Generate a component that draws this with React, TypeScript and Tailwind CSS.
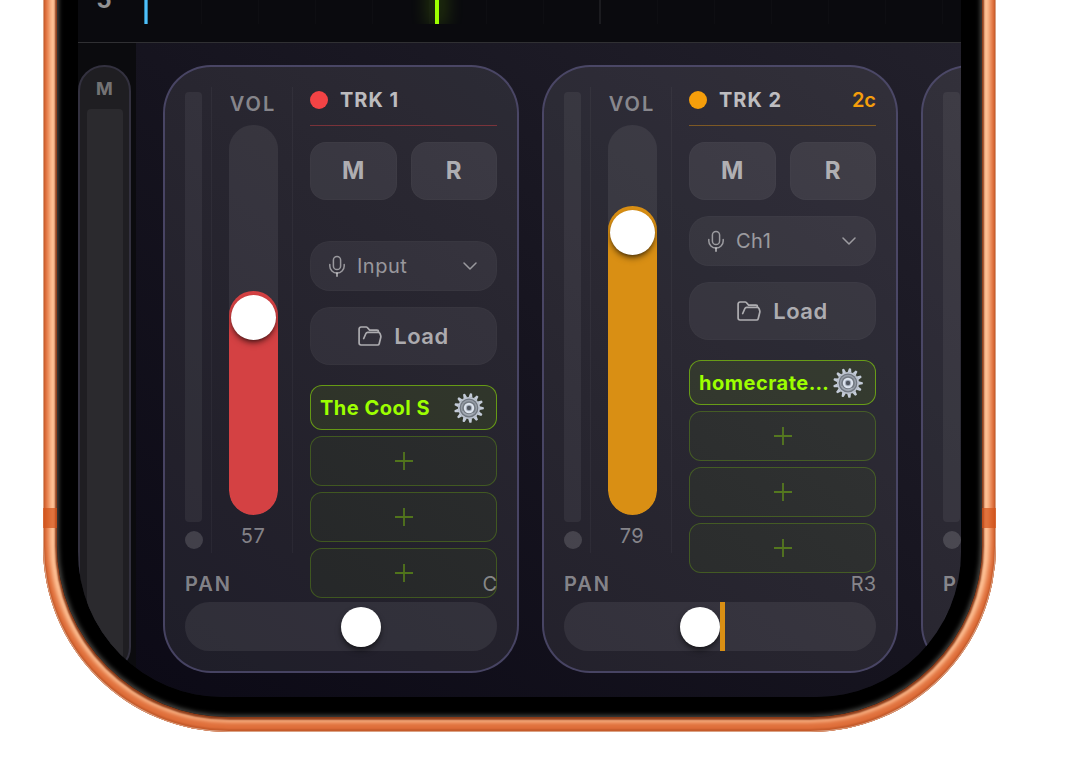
import type { ReactNode } from "react";
import clsx from "clsx";

type Track = {
  id: number;
  name: string;
  badge?: string;
  volume: number;
  pan: string;
  panValue: number;
  input: string;
  plugin: string;
};

const tracks: Track[] = [
  { id: 1, name: "TRK 1", volume: 57.4, pan: "C", panValue: 0, input: "Input", plugin: "The Cool S" },
  { id: 2, name: "TRK 2", badge: "2c", volume: 79.2, pan: "R3", panValue: 3, input: "Ch1", plugin: "homecrate FX" },
  { id: 3, name: "TRK 3", volume: 70, pan: "C", panValue: 0, input: "Input", plugin: "Reverb" },
];

const colors: Record<number, { dot: string; fill: string; line: string }> = {
  1: { dot: "bg-[#f24345]", fill: "bg-[#d44143]", line: "border-[#f24345]/40" },
  2: { dot: "bg-[#f59e0b]", fill: "bg-[#d98f14]", line: "border-[#f59e0b]/40" },
  3: { dot: "bg-[#22c55e]", fill: "bg-[#22a555]", line: "border-[#22c55e]/40" },
};

const beats = Array.from({ length: 15 }, (_, i) => i);
const teeth = Array.from({ length: 13 }, (_, i) => i);

const MicIcon = () => (
  <svg className="h-[22px] w-[18px] shrink-0" viewBox="0 0 18 22" fill="none" stroke="currentColor" strokeWidth="1.5" strokeLinecap="round">
    <rect x="5.4" y="1.5" width="7.2" height="13" rx="3.6" />
    <path d="M1.8 9.5v1.4a7.2 7.2 0 0 0 14.4 0V9.5" />
    <path d="M9 18.2V21" strokeWidth="2" />
  </svg>
);

const ChevronIcon = () => (
  <svg className="h-2 w-[14px] shrink-0" viewBox="0 0 14 8" fill="none" stroke="currentColor" strokeWidth="1.5" strokeLinecap="round" strokeLinejoin="round">
    <path d="M1 1l6 6 6-6" />
  </svg>
);

const FolderIcon = () => (
  <svg className="h-5 w-6 shrink-0" viewBox="0 0 24 20" fill="none" stroke="currentColor" strokeWidth="1.7" strokeLinecap="round" strokeLinejoin="round">
    <path d="M20.5 6.2V5.6c0-.9-.6-1.5-1.5-1.5h-7.4L9.3 1.5a1.6 1.6 0 0 0-1.1-.5H3A1.9 1.9 0 0 0 1.1 2.9v14.2C1.1 18.2 1.9 19 3 19h16.5c.8 0 1.5-.5 1.7-1.3l1.6-6.4c.1-.5.1-1 0-1.4l-.7-2.2c-.3-.8-.9-1.3-1.8-1.3H9.7c-.8 0-1.5.4-1.8 1.1L5.7 12.5" />
  </svg>
);

const GearIcon = () => (
  <svg className="h-[30px] w-[30px]" viewBox="-15 -15 30 30">
    {teeth.map((i) => (
      <path
        key={i}
        d="M-1.9 -10.5L-1.1 -14.6Q0 -15.2 1.1 -14.6L1.9 -10.5Z"
        fill="#c3cbd8"
        transform={`rotate(${(i * 360) / 13 + 8})`}
      />
    ))}
    <circle r="11" fill="#bcc3cf" />
    <circle r="9.4" fill="#6f767f" />
    <circle r="8.2" fill="#969da7" />
    <circle r="6.8" fill="#737a83" />
    <path d="M-6.5 3a7 7 0 0 0 11 2" fill="none" stroke="#a4abb4" strokeWidth="1.2" />
    <circle r="5.2" fill="#dde4ee" />
    <circle r="3.2" fill="#a9b2bf" />
    <circle r="2.2" fill="#50565f" />
  </svg>
);

const PadButton = ({ children }: { children: ReactNode }) => (
  <button className="h-[58px] flex-1 rounded-2xl border border-white/2 bg-white/8 text-2xl font-bold text-white/60">
    {children}
  </button>
);

const VolumeFader = ({ track }: { track: Track }) => (
  <div className="ml-[2px] flex w-[49px] flex-col items-center">
    <label htmlFor={`vol-${track.id}`} className="mt-1 h-[34px] text-xl leading-[26px] font-semibold tracking-widest text-white/45">
      VOL
    </label>
    <div className="relative flex h-[390px] w-full flex-col justify-end overflow-hidden rounded-full bg-white/7">
      <div
        className={clsx("flex justify-center rounded-full pt-1", colors[track.id].fill)}
        style={{ height: `${track.volume}%` }}
      >
        <div className="size-[45px] rounded-full bg-white shadow-md shadow-black/50" />
      </div>
      <input
        id={`vol-${track.id}`}
        type="range"
        step={0.1}
        defaultValue={track.volume}
        className="absolute inset-0 h-full w-full opacity-0 [writing-mode:vertical-lr] [direction:rtl]"
      />
    </div>
    <span className="mt-2 text-xl leading-[26px] tracking-wide text-white/45">{Math.round(track.volume)}</span>
  </div>
);

const PluginSlots = ({ plugin }: { plugin: string }) => (
  <div className="mt-1 flex flex-col gap-[6px]">
    <div className="flex h-[45px] items-center justify-between rounded-xl border border-[#9dff00]/50 bg-[#9dff00]/8 pr-3 pl-[9px]">
      <button className="min-w-0 truncate text-left text-xl leading-7 font-bold tracking-wide text-[#9dff00]">{plugin}</button>
      <button aria-label="Plugin settings" className="shrink-0">
        <GearIcon />
      </button>
    </div>
    {[1, 2, 3].map((slot) => (
      <button
        key={slot}
        aria-label="Add plugin"
        className="flex h-[50px] items-center justify-center rounded-xl border border-[#9dff00]/22 bg-[#9dff00]/4 text-[#9dff00]/35"
      >
        <svg className="size-[18px]" viewBox="0 0 18 18" stroke="currentColor" strokeWidth="1.8">
          <path d="M9 0v18M0 9h18" />
        </svg>
      </button>
    ))}
  </div>
);

const Pan = ({ track }: { track: Track }) => (
  <div className="relative flex flex-col gap-[5px] pt-[18px]">
    <div className="flex items-center justify-between text-xl leading-[26px] text-white/45">
      <label htmlFor={`pan-${track.id}`} className="font-semibold tracking-widest">
        PAN
      </label>
      <span>{track.pan}</span>
    </div>
    <div className="relative flex h-[49px] items-center rounded-full bg-white/7">
      <div className={clsx("flex w-1/2 justify-end", track.panValue === 0 && "translate-x-10")}>
        <div className="size-10 rounded-full bg-white shadow-md shadow-black/50" />
      </div>
      <div
        className={clsx("h-full", colors[track.id].fill)}
        style={{ width: `${track.panValue / 2}%` }}
      />
      <input
        id={`pan-${track.id}`}
        type="range"
        min={-100}
        max={100}
        defaultValue={track.panValue}
        className="absolute inset-0 h-full w-full opacity-0"
      />
    </div>
  </div>
);

const TrackStrip = ({ track }: { track: Track }) => (
  <section className="flex w-[356px] shrink-0 flex-col rounded-[48px] border-2 border-[#57527a]/70 bg-white/8 p-5">
    <div className="flex h-[466px]">
      <div className="flex w-[27px] flex-col gap-[9px] border-r border-white/4 pt-[5px]">
        <div className="h-[430px] w-[17px] rounded bg-white/6" />
        <div className="size-[18px] rounded-full bg-white/15" />
      </div>
      <div className="flex w-[81px] justify-center border-r border-white/4">
        <VolumeFader track={track} />
      </div>
      <div className="ml-[17px] flex min-w-0 flex-1 flex-col gap-4">
        <header className={clsx("flex items-center gap-3 border-b pb-3", colors[track.id].line)}>
          <span className={clsx("size-[18px] rounded-full", colors[track.id].dot)} />
          <h2 className="text-xl leading-[26px] font-bold tracking-wider text-white/70">{track.name}</h2>
          {track.badge && (
            <span className="ml-auto text-xl leading-[26px] font-semibold text-[#f59e0b]">{track.badge}</span>
          )}
        </header>
        <div className="flex gap-[14px]">
          <PadButton>M</PadButton>
          <PadButton>R</PadButton>
        </div>
        <label
          className={clsx(
            "flex h-[50px] shrink-0 items-center gap-[11px] rounded-[20px] border border-white/2 bg-white/6 pr-[19px] pl-[17px] text-white/50",
            !track.badge && "mt-[25px]",
          )}
        >
          <MicIcon />
          <select
            aria-label="Input channel"
            className="min-w-0 flex-1 appearance-none bg-transparent text-xl tracking-wide"
          >
            <option>{track.input}</option>
          </select>
          <ChevronIcon />
        </label>
        <button className="flex h-[58px] shrink-0 items-center justify-center gap-3 rounded-[20px] border border-white/2 bg-white/6 text-[22px] font-semibold tracking-wide text-white/60">
          <FolderIcon />
          Load
        </button>
        <PluginSlots plugin={track.plugin} />
      </div>
    </div>
    <Pan track={track} />
  </section>
);

const Timeline = () => (
  <div className="flex h-[67px] border-b border-[#303033] bg-[#0a0a0e]">
    <div className="w-[66px] shrink-0 pt-[10px] pr-[14px] text-center text-2xl leading-7 font-bold text-white/55">5</div>
    <div className="relative flex h-12 flex-1 overflow-hidden">
      <div className="w-1 shrink-0 border-x border-[#2f7fa5] bg-[#4fc0fa]" />
      <div className="-ml-[3px] flex">
        {beats.map((beat) => (
          <div
            key={beat}
            className={clsx("w-[57px] shrink-0 border-r", beat === 7 ? "border-r-2 border-white/7" : "border-white/2")}
          />
        ))}
      </div>
      <div className="absolute inset-y-0 left-[291px] w-1 bg-[#9dff00] shadow-[0_0_20px_3px_#9dff0050]" />
    </div>
  </div>
);

const MasterStrip = () => (
  <aside className="flex w-[58px] shrink-0 bg-[#0b0b0e] pt-[22px] pr-[5px] pb-6">
    <div className="flex flex-1 flex-col items-center rounded-[26px] border-2 border-[#33313f] bg-[#1f1e22] pt-[10px]">
      <span className="text-lg leading-6 font-bold text-white/40">M</span>
      <div className="mt-2 w-9 flex-1 rounded bg-[#2b2a2e]" />
    </div>
  </aside>
);

export default function App() {
  return (
    <main className="overflow-hidden bg-white pr-20 pb-12 pl-[43px] font-['Inter',sans-serif]">
      <div className="relative -mt-6 overflow-hidden rounded-b-[186px] bg-[#8a3a18] px-[14px] pb-[15px] shadow-[inset_0_0_0_1px_#d9a184,inset_0_-1px_2px_2px_#c45a2a,inset_0_-4px_4px_6px_#e0703c,inset_0_0_2px_12px_#ffc397]">
        {/* antenna bands */}
        <div className="absolute inset-x-0 top-[532px] h-5 bg-[#d3521a]/70" />
        <div className="relative rounded-b-[172px] bg-black px-[21px] pb-5 shadow-[inset_0_0_4px_2px_#454542]">
          <div className="overflow-hidden rounded-b-[145px] bg-[#0a0a0e]">
            <Timeline />
            <div className="flex">
              <MasterStrip />
              <div className="flex min-w-0 flex-1 gap-[23px] overflow-hidden bg-linear-to-tr from-[#0c0a16] via-[#16141f] to-[#22202b] pt-[22px] pb-6 pl-[27px]">
                {tracks.map((track) => (
                  <TrackStrip key={track.id} track={track} />
                ))}
              </div>
            </div>
          </div>
        </div>
      </div>
    </main>
  );
}
